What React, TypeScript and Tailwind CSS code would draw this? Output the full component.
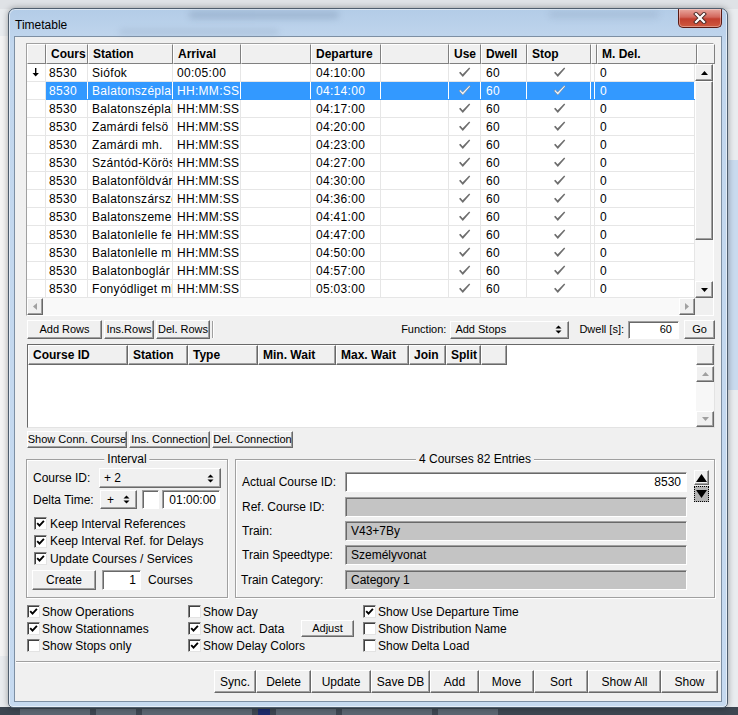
import React from "react";

const raised =
  "bg-[#f0f0f0] border border-t-white border-l-white border-r-[#696969] border-b-[#696969] shadow-[inset_-1px_-1px_0_#a0a0a0]";
const hdr =
  "bg-[#f0f0f0] border border-t-white border-l-white border-r-[#808080] border-b-[#808080]";
const hdr2 =
  "bg-[#f0f0f0] border border-t-white border-l-white border-r-[#696969] border-b-[#696969] shadow-[inset_-1px_-1px_0_#a0a0a0]";
const sunkenWhite =
  "bg-white border border-t-[#a0a0a0] border-l-[#a0a0a0] border-r-white border-b-white shadow-[inset_1px_1px_0_#696969]";
const sunkenGray =
  "bg-[#c4c4c4] border border-t-[#a0a0a0] border-l-[#a0a0a0] border-r-white border-b-white shadow-[inset_1px_1px_0_#696969]";
const small = "text-[11px]";

type Dir = "up" | "down" | "left" | "right";

function Tri({ dir, color }: { dir: Dir; color: string }) {
  if (dir === "up")
    return (
      <svg width="7" height="4" viewBox="0 0 7 4">
        <polygon points="0,4 7,4 3.5,0" fill={color} />
      </svg>
    );
  if (dir === "down")
    return (
      <svg width="7" height="4" viewBox="0 0 7 4">
        <polygon points="0,0 7,0 3.5,4" fill={color} />
      </svg>
    );
  if (dir === "left")
    return (
      <svg width="4" height="7" viewBox="0 0 4 7">
        <polygon points="4,0 4,7 0,3.5" fill={color} />
      </svg>
    );
  return (
    <svg width="4" height="7" viewBox="0 0 4 7">
      <polygon points="0,0 0,7 4,3.5" fill={color} />
    </svg>
  );
}

function ArrowBtn({ dir, dis, cls }: { dir: Dir; dis?: boolean; cls: string }) {
  return (
    <div className={`${cls} ${raised} shrink-0 flex items-center justify-center`}>
      <Tri dir={dir} color={dis ? "#a0a0a0" : "#000"} />
    </div>
  );
}

function UpDown() {
  return (
    <svg width="7" height="9" viewBox="0 0 7 9">
      <polygon points="3.5,0.5 6.5,3.5 0.5,3.5" fill="#000" />
      <polygon points="0.5,5.5 6.5,5.5 3.5,8.5" fill="#000" />
    </svg>
  );
}

function TickGray({ light }: { light?: boolean }) {
  return (
    <svg width="13" height="11" viewBox="0 0 13 11">
      <polygon
        points="1,5.8 2.4,4.8 4.6,7.2 11.2,0.6 12.2,1.6 4.8,10"
        fill={light ? "#eef4fb" : "#6e6e6e"}
        stroke={light ? "#8a8a8a" : "none"}
        strokeWidth="0.6"
      />
    </svg>
  );
}

function DownMark() {
  return (
    <svg width="7" height="9" viewBox="0 0 7 9">
      <rect x="3" y="0" width="1.4" height="6" fill="#000" />
      <polygon points="0.5,5 6.9,5 3.7,8.6" fill="#000" />
    </svg>
  );
}

function CB({ on }: { on?: boolean }) {
  return (
    <div className="w-[13px] h-[13px] shrink-0 bg-white border border-t-[#808080] border-l-[#808080] border-r-[#e3e3e3] border-b-[#e3e3e3] shadow-[inset_1px_1px_0_#404040] flex items-center justify-center">
      {on && (
        <svg width="9" height="9" viewBox="0 0 9 9">
          <path d="M1.2 4.2 L3.5 6.6 L7.9 1.8" fill="none" stroke="#000" strokeWidth="1.9" />
        </svg>
      )}
    </div>
  );
}

const W1 = [
  "w-[19px]",
  "w-[42px]",
  "w-[85px]",
  "w-[68px]",
  "w-[70px]",
  "w-[70px]",
  "w-[68px]",
  "w-[32px]",
  "w-[46px]",
  "w-[64px]",
  "w-[4px]",
  "w-[100px]",
];
const H1 = ["", "Cours", "Station", "Arrival", "", "Departure", "", "Use", "Dwell", "Stop", "", "M. Del."];

const rows = [
  ["Siófok", "00:05:00", "04:10:00"],
  ["Balatonszéplak felső", "HH:MM:SS", "04:14:00"],
  ["Balatonszéplak alsó", "HH:MM:SS", "04:17:00"],
  ["Zamárdi felsö", "HH:MM:SS", "04:20:00"],
  ["Zamárdi mh.", "HH:MM:SS", "04:23:00"],
  ["Szántód-Köröshegy", "HH:MM:SS", "04:27:00"],
  ["Balatonföldvár", "HH:MM:SS", "04:30:00"],
  ["Balatonszárszó", "HH:MM:SS", "04:36:00"],
  ["Balatonszemes", "HH:MM:SS", "04:41:00"],
  ["Balatonlelle felső", "HH:MM:SS", "04:47:00"],
  ["Balatonlelle mh.", "HH:MM:SS", "04:50:00"],
  ["Balatonboglár", "HH:MM:SS", "04:57:00"],
  ["Fonyódliget mh.", "HH:MM:SS", "05:03:00"],
];

function Table1() {
  return (
    <div className="w-[688px] h-[273px] shrink-0 border border-t-[#a0a0a0] border-l-[#a0a0a0] border-r-white border-b-white flex flex-col bg-white">
      <div className="flex h-[20px] shrink-0">
        {H1.map((h, i) => (
          <div
            key={i}
            className={`${W1[i]} h-full shrink-0 ${hdr} font-bold flex items-center pl-[4px] overflow-hidden whitespace-nowrap`}
          >
            {h}
          </div>
        ))}
        <div className={`w-[18px] h-full shrink-0 ${hdr}`} />
      </div>
      <div className="flex h-[234px] shrink-0">
        <div className="w-[668px] h-full flex flex-col tracking-[0.3px]">
          {rows.map((r, k) => {
            const sel = k === 1;
            const line = sel ? "border-r-white" : "border-r-[#e6e6e6]";
            const c = `h-full shrink-0 border-r ${line} overflow-hidden whitespace-nowrap flex items-center`;
            const bg = sel ? "bg-[#3399ff] text-white" : "bg-white";
            return (
              <div key={k} className="flex h-[18px] shrink-0">
                <div className={`${W1[0]} h-full shrink-0 border-r border-r-[#e6e6e6] border-b border-b-[#e6e6e6] bg-white flex items-center justify-center pr-[1px]`}>
                  {k === 0 && <DownMark />}
                </div>
                <div className={`flex h-full border-b ${sel ? "border-b-[#3399ff]" : "border-b-[#e6e6e6]"} ${bg}`}>
                  <div className={`${W1[1]} ${c} pl-[3px]`}>8530</div>
                  <div className={`${W1[2]} ${c} pl-[4px]`}>{r[0]}</div>
                  <div className={`${W1[3]} ${c} pl-[4px]`}>{r[1]}</div>
                  <div className={`${W1[4]} ${c}`} />
                  <div className={`${W1[5]} ${c} pl-[5px]`}>{r[2]}</div>
                  <div className={`${W1[6]} ${c}`} />
                  <div className={`${W1[7]} ${c} justify-center`}>
                    <TickGray light={sel} />
                  </div>
                  <div className={`${W1[8]} ${c} pl-[5px]`}>60</div>
                  <div className={`${W1[9]} ${c} justify-center pl-[1px]`}>
                    <TickGray light={sel} />
                  </div>
                  <div className={`${W1[10]} ${c}`} />
                  <div className={`${W1[11]} ${c} pl-[5px]`}>0</div>
                </div>
              </div>
            );
          })}
        </div>
        <div className="w-[18px] h-full flex flex-col bg-[#f7f7f7]">
          <ArrowBtn dir="up" cls="w-[18px] h-[17px]" />
          <div className={`w-[18px] h-[159px] shrink-0 ${raised}`} />
          <div className="flex-1" />
          <ArrowBtn dir="down" cls="w-[18px] h-[17px]" />
        </div>
      </div>
      <div className="flex h-[17px] shrink-0">
        <div className="w-[668px] h-full flex bg-[#f9f9f9]">
          <ArrowBtn dir="left" dis cls="w-[16px] h-full" />
          <div className="flex-1" />
          <ArrowBtn dir="right" dis cls="w-[16px] h-full" />
        </div>
        <div className="w-[18px] h-full bg-[#f0f0f0]" />
      </div>
    </div>
  );
}

const W2 = ["w-[100px]", "w-[60px]", "w-[70px]", "w-[78px]", "w-[73px]", "w-[37px]", "w-[35px]", "w-[26px]"];
const H2 = ["Course ID", "Station", "Type", "Min. Wait", "Max. Wait", "Join", "Split", ""];

function Table2() {
  return (
    <div className="w-[688px] h-[84px] shrink-0 border border-t-[#696969] border-l-[#696969] border-r-[#e3e3e3] border-b-[#e3e3e3] bg-white flex">
      <div className="w-[668px] h-full">
        <div className="flex h-[20px]">
          {H2.map((h, i) => (
            <div
              key={i}
              className={`${W2[i]} h-full shrink-0 ${hdr2} font-bold flex items-center pl-[4px] overflow-hidden whitespace-nowrap`}
            >
              {h}
            </div>
          ))}
        </div>
      </div>
      <div className="w-[18px] h-full flex flex-col bg-[#f7f7f7]">
        <div className={`h-[20px] shrink-0 ${raised}`} />
        <div className="h-[1px] shrink-0" />
        <ArrowBtn dir="up" dis cls="h-[16px] w-full" />
        <div className="flex-1" />
        <ArrowBtn dir="down" dis cls="h-[16px] w-full" />
      </div>
    </div>
  );
}

function Btn({ cls, children }: { cls: string; children?: React.ReactNode }) {
  return (
    <div className={`${cls} ${raised} shrink-0 flex items-center justify-center whitespace-nowrap overflow-hidden`}>
      {children}
    </div>
  );
}

function Select({ cls, text }: { cls: string; text: string }) {
  return (
    <div className={`${cls} ${raised} shrink-0 flex items-center justify-between pl-[4px] pr-[6px] whitespace-nowrap`}>
      <span>{text}</span>
      <UpDown />
    </div>
  );
}

function CheckRow({ on, label, gap }: { on?: boolean; label: string; gap: string }) {
  return (
    <div className="flex items-center h-[17px] whitespace-nowrap">
      <CB on={on} />
      <span className={gap}>{label}</span>
    </div>
  );
}

function IntervalGroup() {
  return (
    <div className="relative w-[202px] h-[139px] shrink-0 border border-[#a0a0a0] shadow-[inset_1px_1px_0_#fff,1px_1px_0_#fff]">
      <span className="absolute -top-[8px] left-1/2 -translate-x-1/2 px-[3px] bg-[#f0f0f0] leading-[14px]">
        Interval
      </span>
      <div className="flex flex-col pt-[8px] pl-[5px]">
        <div className="flex items-center h-[20px]">
          <span className="w-[67px] pl-[1px]">Course ID:</span>
          <Select cls="w-[122px] h-[20px]" text="+ 2" />
        </div>
        <div className="flex items-center h-[19px] mt-[2px]">
          <span className="w-[68px] pl-[1px]">Delta Time:</span>
          <div className={`w-[37px] h-[19px] ${raised} shrink-0 flex items-center justify-between pl-[6px] pr-[6px]`}>
            <span>+</span>
            <UpDown />
          </div>
          <div className={`w-[17px] h-[19px] ml-[5px] ${sunkenWhite}`} />
          <div className={`w-[58px] h-[19px] ml-[3px] ${sunkenWhite} flex items-center justify-end pr-[3px]`}>
            01:00:00
          </div>
        </div>
        <div className="flex flex-col mt-[6px] pl-[2px]">
          <div className="h-[17.5px] flex items-center">
            <CB on />
            <span className="ml-[3px]">Keep Interval References</span>
          </div>
          <div className="h-[17.5px] flex items-center">
            <CB on />
            <span className="ml-[3px]">Keep Interval Ref. for Delays</span>
          </div>
          <div className="h-[17.5px] flex items-center">
            <CB on />
            <span className="ml-[3px]">Update Courses / Services</span>
          </div>
        </div>
        <div className="flex items-center h-[20px] mt-[2.5px]">
          <Btn cls="w-[64px] h-[20px]">Create</Btn>
          <div className={`w-[39px] h-[20px] ml-[6px] ${sunkenWhite} flex items-center justify-end pr-[4px]`}>1</div>
          <span className="ml-[7px]">Courses</span>
        </div>
      </div>
    </div>
  );
}

function InfoGroup() {
  const lbl = "w-[103px] whitespace-nowrap";
  return (
    <div className="relative w-[480px] h-[139px] shrink-0 border border-[#a0a0a0] shadow-[inset_1px_1px_0_#fff,1px_1px_0_#fff]">
      <span className="absolute -top-[8px] left-1/2 -translate-x-1/2 px-[3px] bg-[#f0f0f0] leading-[14px] whitespace-nowrap">
        4 Courses 82 Entries
      </span>
      <div className="flex pl-[6px] pt-[12px]">
        <div className="flex flex-col">
          <div className="flex items-center h-[20px]">
            <span className={lbl}>Actual Course ID:</span>
            <div className={`w-[342px] h-[20px] ${sunkenWhite} flex items-center justify-end pr-[5px]`}>8530</div>
          </div>
          <div className="flex items-center h-[20px] mt-[5px]">
            <span className={lbl}>Ref. Course ID:</span>
            <div className={`w-[342px] h-[20px] ${sunkenGray}`} />
          </div>
          <div className="flex items-center h-[20px] mt-[4px]">
            <span className={lbl}>Train:</span>
            <div className={`w-[342px] h-[20px] ${sunkenGray} flex items-center pl-[5px]`}>V43+7By</div>
          </div>
          <div className="flex items-center h-[20px] mt-[4px]">
            <span className={lbl}>Train Speedtype:</span>
            <div className={`w-[342px] h-[20px] ${sunkenGray} flex items-center pl-[5px]`}>Személyvonat</div>
          </div>
          <div className="flex items-center h-[20px] mt-[5px]">
            <span className={`${lbl} -ml-[1px]`}>Train Category:</span>
            <div className={`w-[342px] h-[20px] ml-[1px] ${sunkenGray} flex items-center pl-[5px]`}>Category 1</div>
          </div>
        </div>
        <div className="flex flex-col ml-[7px] -mt-[2px] gap-[1px]">
          <div className={`w-[15px] h-[15px] ${raised} flex items-center justify-center`}>
            <svg width="11" height="8" viewBox="0 0 11 8">
              <polygon points="0,8 11,8 5.5,0" fill="#000" />
            </svg>
          </div>
          <div className="w-[15px] h-[16px] bg-[#b4b4b4] border border-dotted border-black flex items-center justify-center">
            <svg width="11" height="8" viewBox="0 0 11 8">
              <polygon points="0,0 11,0 5.5,8" fill="#000" />
            </svg>
          </div>
        </div>
      </div>
    </div>
  );
}

function CloseBtn() {
  return (
    <div className="w-[44px] h-[19px] mr-[5px] shrink-0 rounded-b-[5px] border border-t-0 border-[#5a1a14] bg-[linear-gradient(180deg,#e9a89f_0%,#d3675c_45%,#c23f2f_55%,#cf5a40_100%)] shadow-[inset_0_0_0_1px_rgba(255,255,255,0.35)] flex items-center justify-center">
      <svg width="14" height="12" viewBox="0 0 14 12">
        <path d="M3 2 L11 10 M11 2 L3 10" stroke="#4a2a26" strokeWidth="4" strokeLinecap="square" />
        <path d="M3 2 L11 10 M11 2 L3 10" stroke="#ffffff" strokeWidth="2.2" strokeLinecap="square" />
      </svg>
    </div>
  );
}

export default function App() {
  return (
    <div className="relative w-[738px] h-[715px] overflow-hidden bg-[#e9ecef] font-['Liberation_Sans',Arial,sans-serif] text-[12px] text-black">
      {/* desktop fragments behind the window */}
      <div className="absolute left-0 top-0 w-[738px] h-[9px] bg-[#dfe2e6]" />
      <div className="absolute left-0 top-[36px] w-[9px] h-[620px] bg-[#f4f4f4]" />
      <div className="absolute right-0 top-[160px] w-[10px] h-[230px] bg-[#c9daee]" />
      <div className="absolute left-0 bottom-0 w-[738px] h-[8px] bg-[#3d4651] flex gap-[6px] px-[20px] items-end">
        <div className="w-[70px] h-[6px] bg-[#5c6672]" />
        <div className="w-[40px] h-[6px] bg-[#5c6672]" />
        <div className="w-[110px] h-[6px] bg-[#5c6672]" />
        <div className="w-[12px] h-[6px] bg-[#1d2b6b]" />
        <div className="w-[60px] h-[6px] bg-[#5c6672]" />
        <div className="w-[90px] h-[6px] bg-[#5c6672]" />
        <div className="w-[60px] h-[6px] bg-[#5c6672]" />
      </div>

      {/* the window */}
      <div className="absolute left-[8px] top-[8px] w-[720px] h-[700px] rounded-t-[7px] rounded-b-[5px] border border-[#4f5e6e] bg-[linear-gradient(180deg,#b3cce7_0%,#c2d7ee_5%,#c6daf0_100%)] shadow-[0_0_6px_rgba(0,0,0,0.35),inset_0_0_0_1px_rgba(255,255,255,0.55)] flex flex-col overflow-hidden">
        <div className="relative flex items-start h-[27px] shrink-0">
          <div className="absolute left-[180px] top-[2px] w-[150px] h-[8px] rounded-full bg-[#7f96b3] opacity-40 blur-[3px]" />
          <div className="absolute left-[110px] top-[20px] w-[160px] h-[6px] rounded-full bg-[#8aa0bb] opacity-30 blur-[3px]" />
          <div className="absolute left-[540px] top-[2px] w-[110px] h-[7px] rounded-full bg-[#8aa0bb] opacity-30 blur-[3px]" />
          <span className="relative ml-[6px] mt-[9px] text-[12px] leading-[14px] text-black">Timetable</span>
          <div className="flex-1" />
          <div className="relative">
            <CloseBtn />
          </div>
        </div>

        {/* client area */}
        <div className="ml-[5px] w-[708px] h-[666px] shrink-0 border border-[#7d8fa3] bg-[#f0f0f0] flex flex-col">
          <div className="ml-[11px] mt-[6px]">
            <Table1 />
          </div>

          <div className={`flex items-center h-[19px] mt-[4px] pl-[12px] shrink-0 ${small}`}>
            <Btn cls="w-[75px] h-[19px]">Add Rows</Btn>
            <Btn cls="w-[50px] h-[19px] ml-[2px]">Ins.Rows</Btn>
            <Btn cls="w-[54px] h-[19px] ml-[2px]">Del. Rows</Btn>
            <div className="w-[2px] h-[17px] ml-[2px] border-l border-l-[#a0a0a0] border-r border-r-white" />
            <span className="ml-auto">Function:</span>
            <Select cls="w-[119px] h-[18px] ml-[4px]" text="Add Stops" />
            <span className="ml-[10px]">Dwell [s]:</span>
            <div className={`w-[51px] h-[18px] ml-[4px] ${sunkenWhite} flex items-center justify-end pr-[6px]`}>60</div>
            <Btn cls="w-[31px] h-[19px] ml-[5px] mr-[6px]">Go</Btn>
          </div>

          <div className="ml-[12px] mt-[5px]">
            <Table2 />
          </div>

          <div className={`flex items-center h-[17px] mt-[3px] pl-[12px] shrink-0 ${small}`}>
            <Btn cls="w-[100px] h-[17px]">Show Conn. Course</Btn>
            <Btn cls="w-[81px] h-[17px] ml-[2px]">Ins. Connection</Btn>
            <Btn cls="w-[81px] h-[17px] ml-[2px]">Del. Connection</Btn>
          </div>

          <div className="flex mt-[11px] pl-[11px] gap-[7px] shrink-0">
            <IntervalGroup />
            <InfoGroup />
          </div>

          <div className="flex mt-[5px] pl-[12px] shrink-0">
            <div className="w-[161px] flex flex-col">
              <CheckRow on label="Show Operations" gap="ml-[2px]" />
              <CheckRow on label="Show Stationnames" gap="ml-[2px]" />
              <CheckRow label="Show Stops only" gap="ml-[2px]" />
            </div>
            <div className="w-[175px] flex flex-col">
              <CheckRow label="Show Day" gap="ml-[2px]" />
              <div className="flex items-center h-[17px] whitespace-nowrap">
                <CB on />
                <span className="ml-[2px]">Show act. Data</span>
                <Btn cls={`w-[53px] h-[17px] ml-auto mr-[9px] ${small}`}>Adjust</Btn>
              </div>
              <CheckRow on label="Show Delay Colors" gap="ml-[2px]" />
            </div>
            <div className="flex flex-col">
              <CheckRow on label="Show Use Departure Time" gap="ml-[2px]" />
              <CheckRow label="Show Distribution Name" gap="ml-[2px]" />
              <CheckRow label="Show Delta Load" gap="ml-[2px]" />
            </div>
          </div>

          <div className="h-[2px] mt-[7px] mx-[1px] border-t border-t-[#a0a0a0] border-b border-b-white shrink-0" />

          <div className="flex justify-end h-[23px] mt-[7px] pr-[3px] shrink-0">
            <Btn cls="w-[42px] h-[23px]">Sync.</Btn>
            <Btn cls="w-[55px] h-[23px]">Delete</Btn>
            <Btn cls="w-[60px] h-[23px]">Update</Btn>
            <Btn cls="w-[59px] h-[23px]">Save DB</Btn>
            <Btn cls="w-[49px] h-[23px]">Add</Btn>
            <Btn cls="w-[55px] h-[23px]">Move</Btn>
            <Btn cls="w-[54px] h-[23px]">Sort</Btn>
            <Btn cls="w-[73px] h-[23px]">Show All</Btn>
            <Btn cls="w-[57px] h-[23px]">Show</Btn>
          </div>
        </div>
      </div>
    </div>
  );
}
